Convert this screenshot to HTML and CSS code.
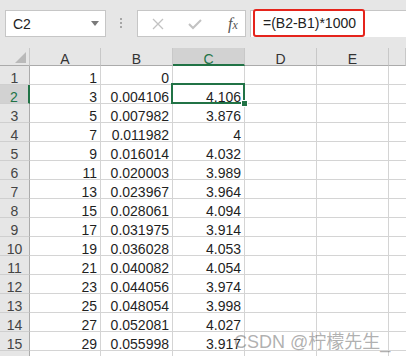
FILE: index.html
```html
<html>
  <head>
    <link rel="stylesheet" href="styles.css">
  </head>
  <body>
    <div class="bar">
      <div class="namebox">
        <span>C2</span>
        <svg class="arrow" width="8" height="5" viewBox="0 0 8 5"><polygon points="0,0 8,0 4,5" fill="#7a7a7a"/></svg>
      </div>
      <div class="dots">
        <svg width="3" height="11" viewBox="0 0 3 11"><rect x="0" y="0" width="2" height="2" fill="#a6a6a6"/><rect x="0" y="4" width="2" height="2" fill="#a6a6a6"/><rect x="0" y="8" width="2" height="2" fill="#a6a6a6"/></svg>
      </div>
      <div class="fbtns">
        <svg width="12" height="12" viewBox="0 0 12 12"><path d="M1 1 L11 11 M11 1 L1 11" stroke="#c2c2c2" stroke-width="1.3"/></svg>
        <svg width="14" height="12" viewBox="0 0 14 12"><path d="M1 6 L5 10 L13 2" stroke="#c2c2c2" stroke-width="2" fill="none"/></svg>
        <span class="fx">f<small>x</small></span>
      </div>
      <div class="finput">
        <span class="hl">=(B2-B1)*1000</span>
      </div>
    </div>

    <div class="sheet">
      <div class="row head">
        <div class="corner"><svg width="11" height="11" viewBox="0 0 11 11"><polygon points="11,0 11,11 0,11" fill="#b9b9b9"/></svg></div>
        <div class="ch">A</div>
        <div class="ch">B</div>
        <div class="ch on">C</div>
        <div class="ch">D</div>
        <div class="ch">E</div>
        <div class="ch last"></div>
      </div>
      <div class="row"><div class="rh">1</div><div class="c">1</div><div class="c">0</div><div class="c"></div><div class="c"></div><div class="c"></div><div class="c last"></div></div>
      <div class="row"><div class="rh on">2</div><div class="c">3</div><div class="c">0.004106</div><div class="c sel">4.106</div><div class="c"></div><div class="c"></div><div class="c last"></div></div>
      <div class="row"><div class="rh">3</div><div class="c">5</div><div class="c">0.007982</div><div class="c">3.876</div><div class="c"></div><div class="c"></div><div class="c last"></div></div>
      <div class="row"><div class="rh">4</div><div class="c">7</div><div class="c">0.011982</div><div class="c">4</div><div class="c"></div><div class="c"></div><div class="c last"></div></div>
      <div class="row"><div class="rh">5</div><div class="c">9</div><div class="c">0.016014</div><div class="c">4.032</div><div class="c"></div><div class="c"></div><div class="c last"></div></div>
      <div class="row"><div class="rh">6</div><div class="c">11</div><div class="c">0.020003</div><div class="c">3.989</div><div class="c"></div><div class="c"></div><div class="c last"></div></div>
      <div class="row"><div class="rh">7</div><div class="c">13</div><div class="c">0.023967</div><div class="c">3.964</div><div class="c"></div><div class="c"></div><div class="c last"></div></div>
      <div class="row"><div class="rh">8</div><div class="c">15</div><div class="c">0.028061</div><div class="c">4.094</div><div class="c"></div><div class="c"></div><div class="c last"></div></div>
      <div class="row"><div class="rh">9</div><div class="c">17</div><div class="c">0.031975</div><div class="c">3.914</div><div class="c"></div><div class="c"></div><div class="c last"></div></div>
      <div class="row"><div class="rh">10</div><div class="c">19</div><div class="c">0.036028</div><div class="c">4.053</div><div class="c"></div><div class="c"></div><div class="c last"></div></div>
      <div class="row"><div class="rh">11</div><div class="c">21</div><div class="c">0.040082</div><div class="c">4.054</div><div class="c"></div><div class="c"></div><div class="c last"></div></div>
      <div class="row"><div class="rh">12</div><div class="c">23</div><div class="c">0.044056</div><div class="c">3.974</div><div class="c"></div><div class="c"></div><div class="c last"></div></div>
      <div class="row"><div class="rh">13</div><div class="c">25</div><div class="c">0.048054</div><div class="c">3.998</div><div class="c"></div><div class="c"></div><div class="c last"></div></div>
      <div class="row"><div class="rh">14</div><div class="c">27</div><div class="c">0.052081</div><div class="c">4.027</div><div class="c"></div><div class="c"></div><div class="c last"></div></div>
      <div class="row"><div class="rh">15</div><div class="c">29</div><div class="c">0.055998</div><div class="c">3.917</div><div class="c"></div><div class="c"></div><div class="c last"></div></div>
      <div class="row"><div class="rh"></div><div class="c"></div><div class="c"></div><div class="c"></div><div class="c"></div><div class="c"></div><div class="c last"></div></div>
    </div>

    <div class="mark">CSDN @柠檬先生_</div>
  </body>
</html>
```

FILE: styles.css
```css
html, body {
    margin: 0;
    padding: 0;
    height: 356px;
    overflow: hidden;
    background: #ffffff;
    font-family: "Liberation Sans", Arial, sans-serif;
    font-size: 14px;
    color: #1f1f1f;
}

body {
    position: relative;
}

/* formula bar */
.bar {
    height: 48px;
    box-sizing: border-box;
    padding-top: 10px;
    background: #e6e6e6;
    display: flex;
    align-items: flex-start;
}

.namebox {
    margin-left: 5px;
    width: 101px;
    height: 27px;
    box-sizing: border-box;
    background: #fff;
    border: 1px solid #c6c6c6;
    display: flex;
    align-items: center;
    justify-content: space-between;
    padding: 0 6px 0 7px;
    color: #222;
}

.namebox span {
    padding-top: 1px;
}

.dots {
    width: 31px;
    height: 27px;
    display: flex;
    align-items: center;
    justify-content: center;
}

.fbtns {
    width: 109px;
    height: 27px;
    box-sizing: border-box;
    background: #fff;
    border: 1px solid #c6c6c6;
    display: flex;
    align-items: center;
    padding-left: 14px;
    gap: 24px;
}

.fx {
    font-family: "Liberation Serif", serif;
    font-style: italic;
    font-size: 16px;
    color: #555;
    margin-left: 2px;
}

.fx small {
    font-size: 12px;
}

.finput {
    flex: 1;
    margin-left: 4px;
    height: 27px;
    box-sizing: border-box;
    background: #fff;
    border-top: 1px solid #c6c6c6;
    border-left: 1px solid #c6c6c6;
}

.hl {
    display: block;
    margin: -2px 0 0 2px;
    width: 112px;
    height: 28px;
    box-sizing: border-box;
    border: 2px solid #e5241c;
    border-radius: 3px;
    padding: 4px 0 0 8px;
    font-size: 14px;
    color: #222;
}

/* sheet */
.row {
    display: grid;
    grid-template-columns: 30px 71px 72px 72px 72px 72px 1fr;
    height: 19px;
}

.row > div {
    box-sizing: border-box;
    height: 19px;
    border-right: 1px solid #d4d4d4;
    border-bottom: 1px solid #d4d4d4;
    padding: 4px 3px 0 0;
    line-height: 16px;
    text-align: right;
    white-space: nowrap;
    overflow: hidden;
}

.row > .last {
    border-right: none;
}

.row.head {
    height: 18px;
    background: #e6e6e6;
}

.row.head > div {
    height: 18px;
    padding: 3px 0 0 0;
    text-align: center;
    border-right: 1px solid #c8c8c8;
    border-bottom: 1px solid #ababab;
    color: #333;
}

.row.head > .corner {
    position: relative;
}

.corner svg {
    position: absolute;
    left: 15px;
    top: 4px;
}

.row.head > .ch.on {
    background: #d2d2d2;
    color: #217346;
    border-bottom: 2px solid #217346;
}

.row > .rh {
    background: #e6e6e6;
    text-align: center;
    padding: 4px 0 0 0;
    color: #444;
    border-right: 1px solid #ababab;
    border-bottom: 1px solid #cfcfcf;
}

.row > .rh.on {
    background: #d2d2d2;
    color: #217346;
    border-right: 2px solid #217346;
}

.c.sel {
    overflow: visible;
    position: relative;
}

.c.sel::after {
    content: "";
    position: absolute;
    top: -2px;
    left: -2px;
    right: -1px;
    bottom: -1px;
    border: 2px solid #217346;
}

.c.sel::before {
    content: "";
    position: absolute;
    right: -4px;
    bottom: -4px;
    width: 5px;
    height: 5px;
    background: #217346;
    border: 1px solid #fff;
    z-index: 2;
}

.mark {
    position: absolute;
    left: 234px;
    top: 327px;
    font-size: 18px;
    color: rgba(110, 110, 110, 0.55);
    font-family: "Liberation Sans", "Noto Sans CJK SC", sans-serif;
}
```
